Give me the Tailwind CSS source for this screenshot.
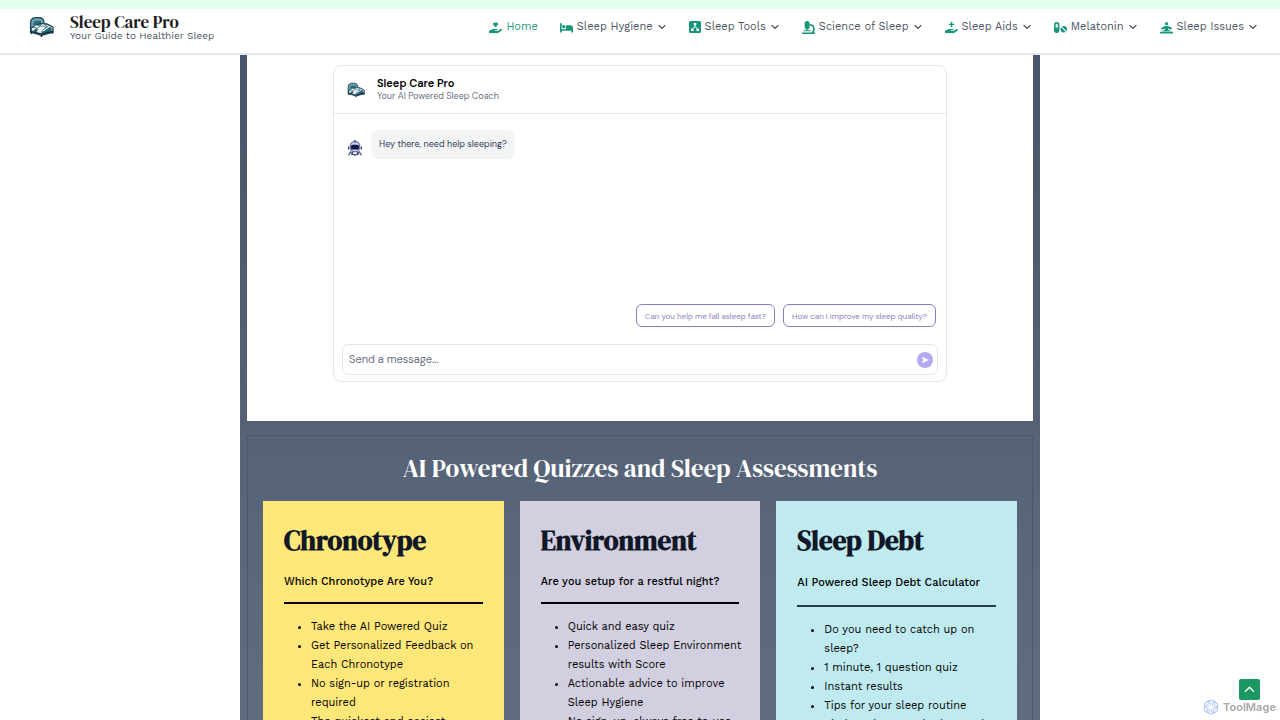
<!DOCTYPE html>
<html lang="en">
<head>
  <meta charset="UTF-8" />
  <meta name="viewport" content="width=device-width, initial-scale=1.0" />
  <title>Sleep Care Pro</title>
  <script src="https://cdn.jsdelivr.net/npm/@tailwindcss/browser@4"></script>
</head>
<body class="bg-white h-screen overflow-hidden font-['Work_Sans','Inter',sans-serif] text-black">
  <!-- Shared icons -->
  <svg class="hidden">
    <symbol id="chevron" viewBox="0 0 10 10"><path d="M2 3.500l3 3 3-3" fill="none" stroke="currentColor" stroke-width="1.200" stroke-linecap="round" /></symbol>
    <symbol id="hand" viewBox="0 0 576 512"><path d="M559.700 392.200l-135.100 99.500c-17.200 12.700-38 19.500-59.300 19.500H32c-17.700 0-32-14.300-32-32v-64c0-17.700 14.300-32 32-32h36.800l44.900-36c22.700-18.200 50.900-28 80-28H352c17.700 0 32 14.300 32 32s-14.300 32-32 32h-80c-8.800 0-16 7.200-16 16s7.200 16 16 16h120.600l119.700-88.200c17.800-13.100 42.800-9.300 55.900 8.500s9.300 42.800-8.500 55.900z" /></symbol>
    <symbol id="bed" viewBox="0 0 24 20">
      <path d="M1.500 15V6Q1.500 1.500 6 1h4q4 0 4.500 5v5z" fill="#6ba3ae" stroke="#1d4452" stroke-width="1.200" />
      <path d="M4 8q0-4 3-4h3q2 0 2 3v3z" fill="#2b6c7b" />
      <path d="M2 11l8-4h7l6 3v5l-11 3-10-3z" fill="#e6f3f5" stroke="#173b49" stroke-width="1.200" stroke-linejoin="round" />
      <path d="M4 10l3-2 4 1-3 2zM10 8.500l3-1.500 4 1-3 1.500z" fill="white" stroke="#2b5a68" stroke-width=".7" />
      <path d="M12 14l5-5 5 2-1 4-9 2zM4 13l4-2 1 3-3 1z" fill="#2a6474" />
      <path d="M13 14l6-4M10 11l-2 4" fill="none" stroke="#e9f8fa" stroke-width="1.100" />
      <path d="M2 14l10 3 11-3M2.500 14v3M12 16v3.500M22.500 13v3.500" fill="none" stroke="#153644" stroke-width="1.400" />
    </symbol>
  </svg>

  <!-- Header -->
  <header class="border-b-2 border-gray-200">
    <div class="h-[9px] bg-[#e5ffed]"></div>
    <div class="h-11 pl-[29px] pr-[22px] flex items-center justify-between">
      <a href="#" class="flex items-center gap-4 pb-2">
        <svg class="w-[25px] h-6"><use href="#bed" /></svg>
        <span class="block">
          <span class="block font-['DM_Serif_Display','Liberation_Serif',serif] text-[17px] leading-4 text-[#202020]">Sleep Care Pro</span>
          <span class="block text-[10px] leading-[11px] text-gray-600">Your Guide to Healthier Sleep</span>
        </span>
      </a>
      <nav class="flex items-center gap-[22px] pb-2 text-[11px] text-gray-600">
        <a href="#" class="flex items-center gap-1 text-[#279681]">
          <svg class="w-[13px] h-[13px]" viewBox="0 0 576 512" fill="#17967c"><use href="#hand" /><path d="M290 240l-94-94c-58-65 34-151 94-89 60-62 152 24 94 89z" /></svg>
          Home
        </a>
        <a href="#" class="flex items-center gap-1">
          <svg class="w-[13px] h-[13px]" viewBox="0 0 24 20" fill="#17967c"><path d="M0 2h3v11h8V6h8q5 0 5 5v8h-3v-3H3v3H0z" /><circle cx="7" cy="8.500" r="3" /></svg>
          Sleep Hygiene
          <svg class="w-[10px] h-[10px]"><use href="#chevron" /></svg>
        </a>
        <a href="#" class="flex items-center gap-1">
          <svg class="w-3 h-3" viewBox="0 0 24 24"><rect width="24" height="24" rx="3" fill="#17967c" /><path d="M9.500 4h5v5h-5zM4 15h5v5H4zM15 15h5v5h-5z" fill="white" /><path d="M12 8v5M11 12l-5 5M13 12l5 5" fill="none" stroke="white" stroke-width="2" /></svg>
          Sleep Tools
          <svg class="w-[10px] h-[10px]"><use href="#chevron" /></svg>
        </a>
        <a href="#" class="flex items-center gap-1">
          <svg class="w-[13px] h-[13px]" viewBox="0 0 24 24" fill="#17967c"><path d="M7 0h5v2h2v12h-2v2H7v-2H5V2h2zM3 17h13v2H3zM0 21h24v3H0z" /><path d="M14 7q8 0 8 8 0 5-4 8" fill="none" stroke="#17967c" stroke-width="3" /></svg>
          Science of Sleep
          <svg class="w-[10px] h-[10px]"><use href="#chevron" /></svg>
        </a>
        <a href="#" class="flex items-center gap-1">
          <svg class="w-[13px] h-[13px]" viewBox="0 0 576 512" fill="#17967c"><use href="#hand" /><path d="M256 0h65v85h85v65h-85v85h-65v-85h-85V85h85z" /></svg>
          Sleep Aids
          <svg class="w-[10px] h-[10px]"><use href="#chevron" /></svg>
        </a>
        <a href="#" class="flex items-center gap-1">
          <svg class="w-[13px] h-[13px]" viewBox="0 0 24 24"><rect x="1.500" y="3.500" width="7" height="17" rx="3.500" fill="none" stroke="#17967c" stroke-width="3" /><path d="M1 12h8v6q-4 5-8 0z" fill="#17967c" /><circle cx="18" cy="15" r="6" fill="#17967c" /><path d="M13 10l10 10" stroke="white" stroke-width="2" /></svg>
          Melatonin
          <svg class="w-[10px] h-[10px]"><use href="#chevron" /></svg>
        </a>
        <a href="#" class="flex items-center gap-1">
          <svg class="w-[13px] h-[13px]" viewBox="0 0 24 24" fill="#17967c"><circle cx="12" cy="5" r="3" /><path d="M9 9h6l7 4-1 3-6-2v2l6 3H3l6-3v-2l-6 2-1-3zM0 20h24v3H0z" /></svg>
          Sleep Issues
          <svg class="w-[10px] h-[10px]"><use href="#chevron" /></svg>
        </a>
      </nav>
    </div>
  </header>

  <main class="max-w-[800px] mx-auto px-[7px] bg-linear-to-b from-[#465569] via-[#556275] to-[#626d80]">
    <!-- Chat -->
    <section class="bg-white px-[86px] pt-[10px] pb-[39px]">
      <div class="border border-gray-200 rounded-lg font-['DM_Sans','Inter',sans-serif]">
        <div class="h-12 flex items-center gap-3 px-[13px] border-b border-gray-200">
          <svg class="w-[18px] h-4"><use href="#bed" /></svg>
          <div>
            <h2 class="text-[11px] leading-[14px] font-semibold">Sleep Care Pro</h2>
            <p class="text-[9px] leading-[13px] text-gray-500">Your AI Powered Sleep Coach</p>
          </div>
        </div>
        <div class="h-[190px] pt-4 px-[13px] flex items-start gap-2">
          <svg class="w-4 h-4 mt-[10px]" viewBox="0 0 20 20"><path d="M4 8q0-6 6-6t6 6v3q-2 4-6 4t-6-4z" fill="#c8d3ef" stroke="#26366d" /><rect x="5" y="6" width="10" height="6" rx="2" fill="#121849" /><path d="M10 0v3M2 8v4M18 8v4M5 14l-3 5M15 14l3 5M5 16l5 3 5-3M7 15l-1 4M13 15l1 4" stroke="#31427b" stroke-width="1.500" fill="none" /></svg>
          <p class="bg-gray-100 rounded-lg px-2 py-2 text-[9px] leading-[13px] text-gray-700">Hey there, need help sleeping?</p>
        </div>
        <div class="flex justify-end gap-2 px-[10px]">
          <button class="h-[23px] px-2 border border-[#8880bd] rounded-md text-[8px] text-[#8b82bd]">Can you help me fall asleep fast?</button>
          <button class="h-[23px] px-2 border border-[#8880bd] rounded-md text-[8px] text-[#8b82bd]">How can I improve my sleep quality?</button>
        </div>
        <form class="mt-[17px] mx-2 mb-[6px] h-[31px] pl-[6px] pr-1 flex items-center border border-gray-200 rounded-md">
          <input type="text" aria-label="Message" placeholder="Send a message..." class="flex-1 text-[11px] placeholder:text-gray-500 outline-none" />
          <button type="button" aria-label="Send" class="w-4 h-4 rounded-full bg-[#b5a8ee] flex items-center justify-center">
            <svg class="w-2 h-2" viewBox="0 0 10 10"><path d="M1 1l9 4-9 4 2-4z" fill="white" /></svg>
          </button>
        </form>
      </div>
    </section>

    <!-- Quizzes -->
    <section class="mt-[14px] px-[15px] pt-[14px] border border-[#4a586b]">
      <h2 class="text-center font-['DM_Serif_Display','Liberation_Serif',serif] text-[25px] leading-9 text-white">AI Powered Quizzes and Sleep Assessments</h2>
      <div class="mt-[15px] grid grid-cols-3 gap-4">
        <article class="bg-[#ffe77a] px-[21px] pt-[22px] pb-6">
          <h3 class="font-['DM_Serif_Display','Liberation_Serif',serif] font-bold text-[27px] leading-9 text-[#101827]">Chronotype</h3>
          <p class="mt-[14px] text-[11px] leading-[18px] font-medium">Which Chronotype Are You?</p>
          <hr class="mt-[11px] border-t-2 border-black" />
          <ul class="mt-[13px] pl-[27px] -mr-2 list-disc text-[11px] leading-[19px]">
            <li>Take the AI Powered Quiz</li>
            <li>Get Personalized Feedback on Each Chronotype</li>
            <li>No sign-up or registration required</li>
            <li>The quickest and easiest</li>
          </ul>
        </article>
        <article class="bg-[#d2d0e0] px-[21px] pt-[22px] pb-6">
          <h3 class="font-['DM_Serif_Display','Liberation_Serif',serif] font-bold text-[27px] leading-9 text-[#101827]">Environment</h3>
          <p class="mt-[14px] text-[11px] leading-[18px] font-medium">Are you setup for a restful night?</p>
          <hr class="mt-[11px] border-t-2 border-black" />
          <ul class="mt-[13px] pl-[27px] -mr-2 list-disc text-[11px] leading-[19px]">
            <li>Quick and easy quiz</li>
            <li>Personalized Sleep Environment results with Score</li>
            <li>Actionable advice to improve Sleep Hygiene</li>
            <li>No sign-up, always free to use</li>
          </ul>
        </article>
        <article class="bg-[#bfebf0] px-[21px] pt-[22px] pb-6">
          <h3 class="font-['DM_Serif_Display','Liberation_Serif',serif] font-bold text-[27px] leading-9 text-[#101827]">Sleep Debt</h3>
          <p class="mt-[15px] text-[11px] leading-[18px] font-medium">AI Powered Sleep Debt Calculator</p>
          <hr class="mt-[13px] border-t-2 border-[#233d45]" />
          <ul class="mt-[13px] pl-[27px] -mr-2 list-disc text-[11px] leading-[19px]">
            <li>Do you need to catch up on sleep?</li>
            <li>1 minute, 1 question quiz</li>
            <li>Instant results</li>
            <li>Tips for your sleep routine</li>
            <li>Find out how much Sleep Debt</li>
          </ul>
        </article>
      </div>
    </section>
  </main>

  <!-- Back to top and watermark -->
  <a href="#" aria-label="Back to top" class="fixed right-5 bottom-5 w-[21px] h-[21px] rounded-xs bg-[#1b9862] flex items-center justify-center">
    <svg class="w-[11px] h-[11px]" viewBox="0 0 10 10"><path d="M1 7l4-4 4 4" fill="none" stroke="white" stroke-width="1.300" /></svg>
  </a>
  <div class="fixed right-1 bottom-1 flex items-center gap-1 font-['Inter',sans-serif] text-[11px] leading-[18px] font-bold text-[#adadb0]">
    <svg class="w-4 h-4" viewBox="0 0 20 20" fill="none" stroke="#a8c0f5" stroke-width="1.200">
      <path id="petal" d="M10 7Q5 6 6 3q3-3 7-1 3 2 1 6" />
      <use href="#petal" transform="rotate(60 10 10)" />
      <use href="#petal" transform="rotate(120 10 10)" />
      <use href="#petal" transform="rotate(180 10 10)" />
      <use href="#petal" transform="rotate(240 10 10)" />
      <use href="#petal" transform="rotate(300 10 10)" />
    </svg>
    ToolMage
  </div>
</body>
</html>
